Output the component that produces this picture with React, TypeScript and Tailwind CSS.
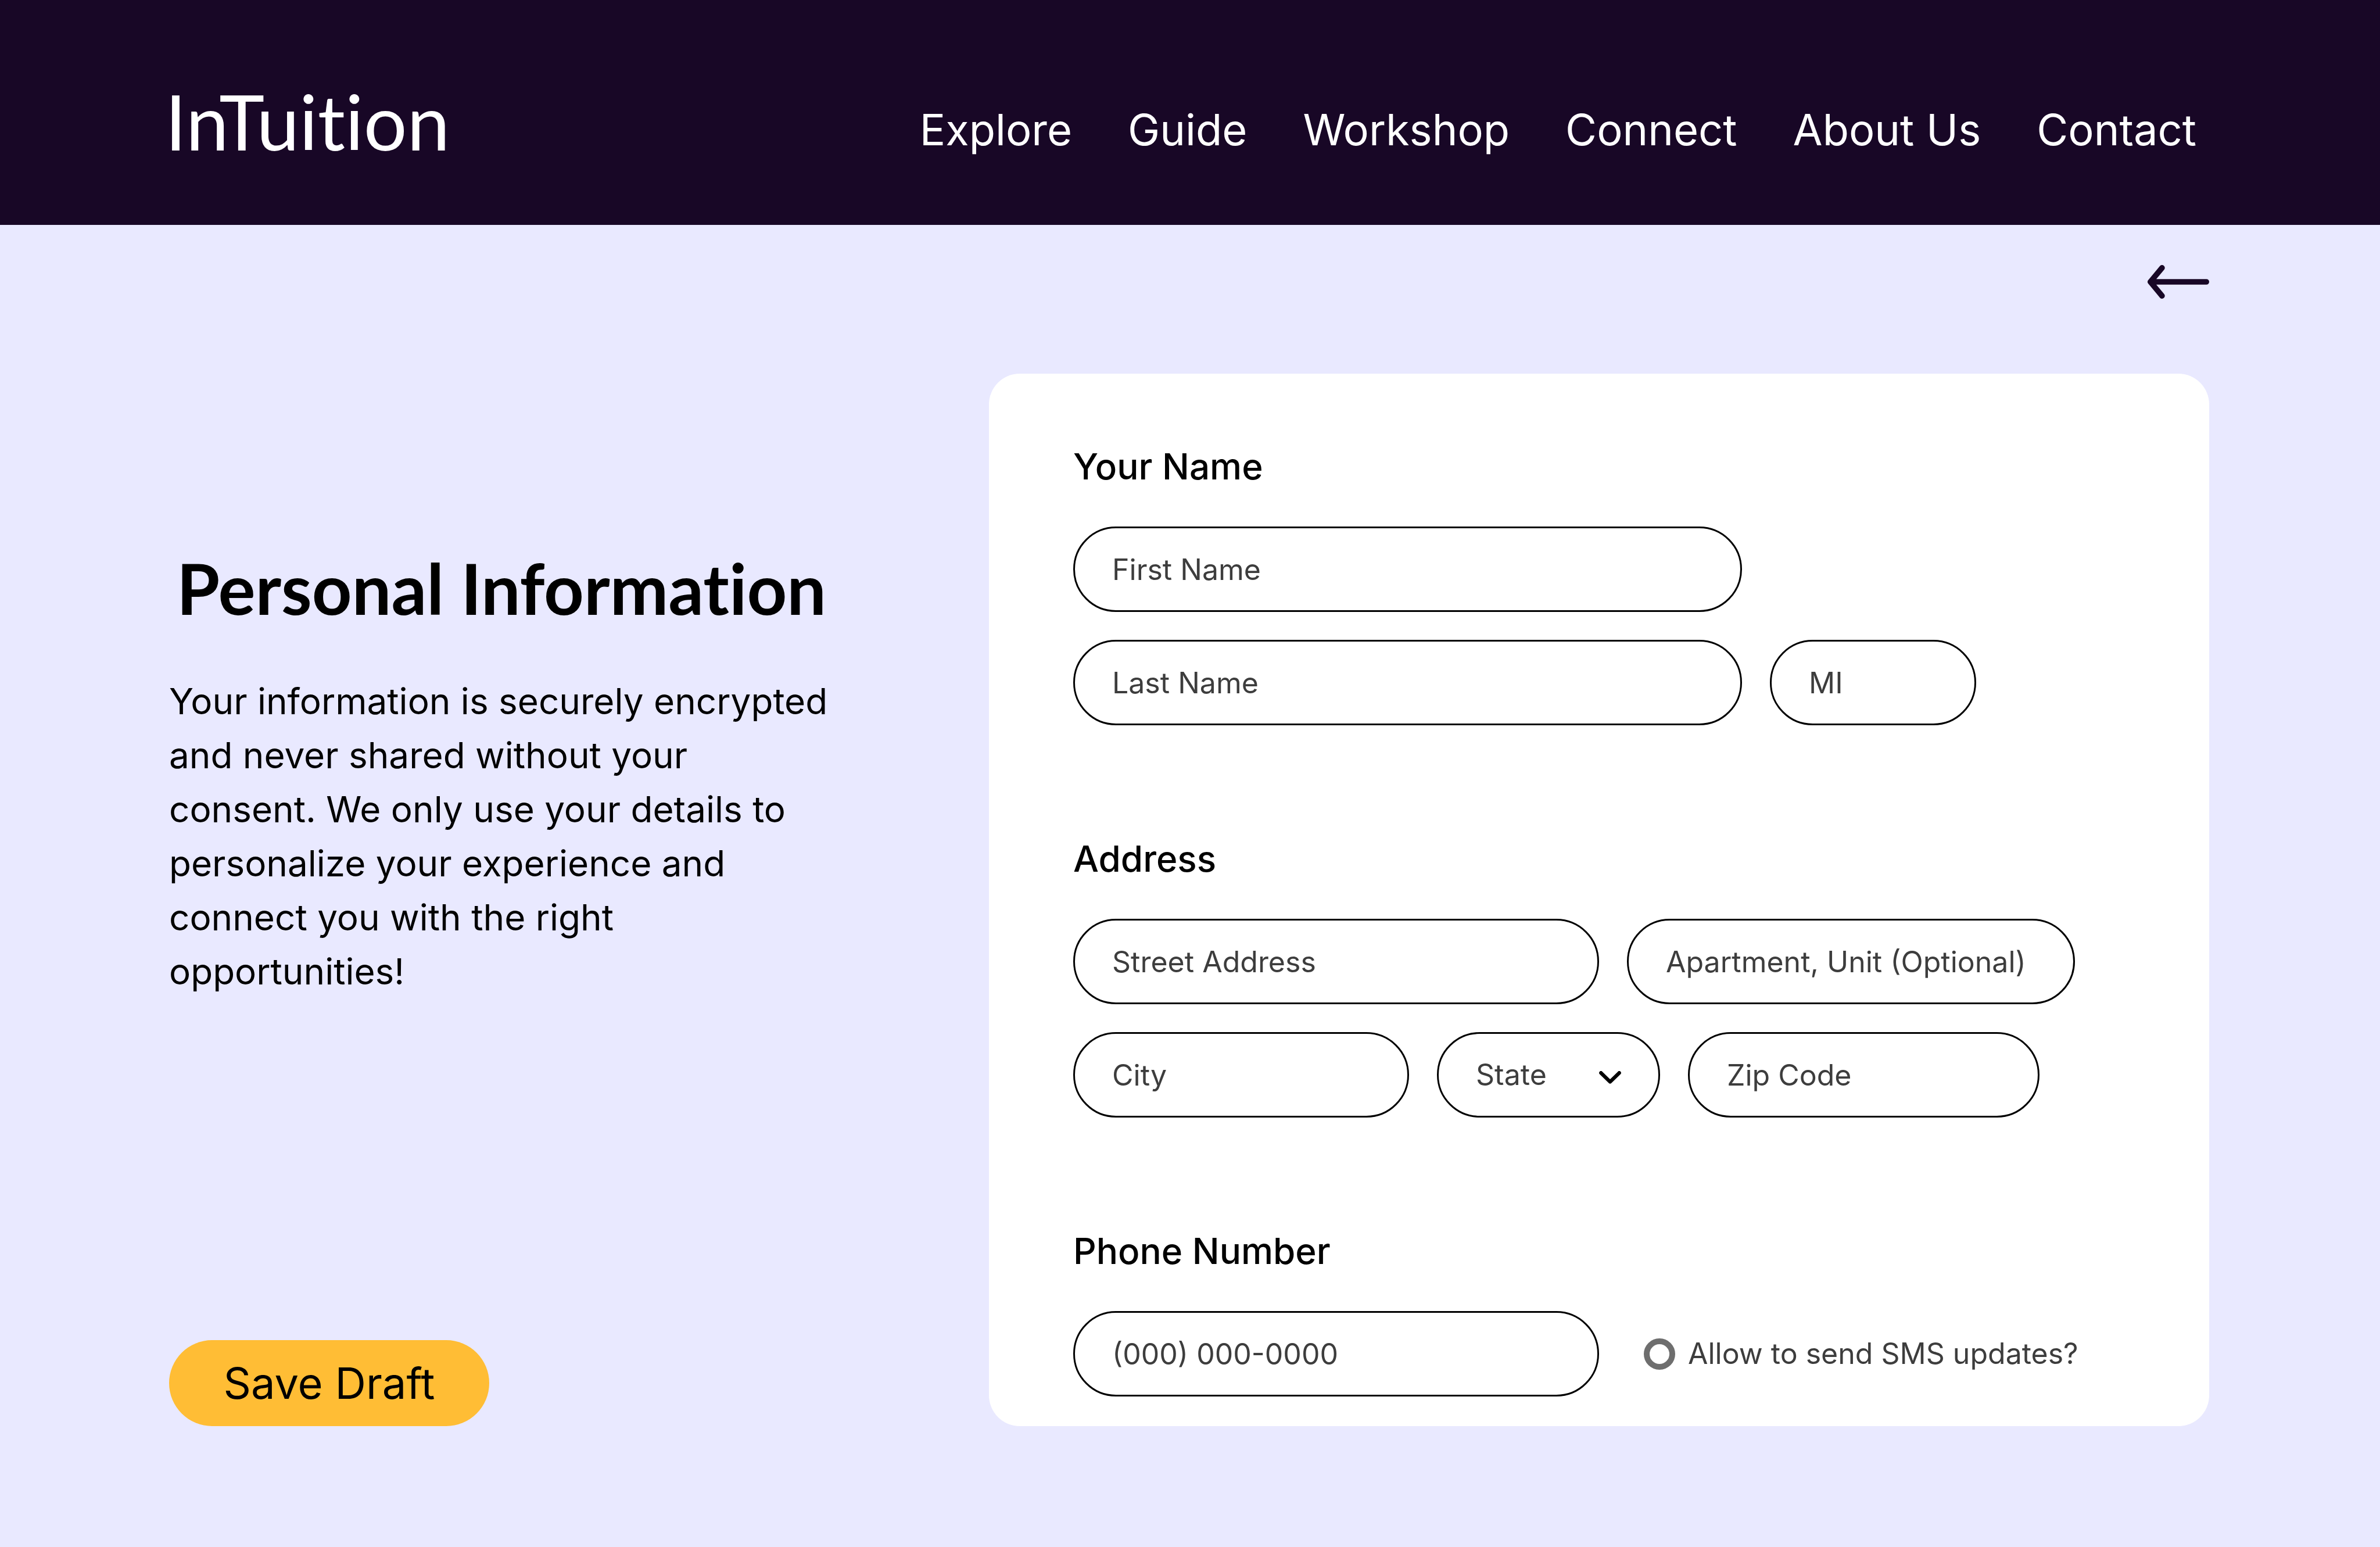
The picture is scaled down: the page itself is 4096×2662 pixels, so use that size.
import clsx from 'clsx'
import type { InputHTMLAttributes, ReactNode } from 'react'

const NAV_ITEMS = ['Explore', 'Guide', 'Workshop', 'Connect', 'About Us', 'Contact']

const STATES = ['California', 'Colorado', 'New York', 'Oregon', 'Texas', 'Washington']

const FIELD_STYLE =
  'h-[147px] rounded-full border-[3px] border-black bg-white pl-[64px] text-[50px]'

function TextField({ className, ...props }: InputHTMLAttributes<HTMLInputElement>) {
  return (
    <input
      type="text"
      aria-label={props.placeholder}
      className={clsx(
        FIELD_STYLE,
        'min-w-0 pr-8 text-black placeholder:text-[#3d3d3d] placeholder:opacity-100',
        className,
      )}
      {...props}
    />
  )
}

function StateSelect() {
  return (
    <div className="relative w-[384px]">
      <select
        aria-label="State"
        defaultValue=""
        className={clsx(FIELD_STYLE, 'w-full appearance-none text-[#3d3d3d]')}
      >
        <option value="" disabled>
          State
        </option>
        {STATES.map((state) => (
          <option key={state}>{state}</option>
        ))}
      </select>
      <svg
        viewBox="0 0 48 28"
        fill="none"
        className="pointer-events-none absolute top-[67px] right-[67px] h-[22px] w-[38px]"
      >
        <path
          d="M4 4 24 23.5 44 4"
          stroke="#000"
          strokeWidth="8"
          strokeLinecap="round"
          strokeLinejoin="round"
        />
      </svg>
    </div>
  )
}

function FieldGroup({ title, children }: { title: string; children: ReactNode }) {
  return (
    <fieldset>
      <legend className="pb-[63px] text-[62px] leading-[80px] font-medium text-black">
        {title}
      </legend>
      <div className="flex flex-col gap-12">{children}</div>
    </fieldset>
  )
}

function Header() {
  return (
    <header className="flex items-end justify-between bg-[#180726] pt-[150px] pr-[316px] pb-[120px] pl-[284px] text-white">
      <a
        href="#"
        className="font-['Lato',sans-serif] text-[132px] leading-[117px] [font-variant-ligatures:none]"
      >
        InTuition
      </a>
      <nav className="flex gap-24 text-[74px] leading-[88px]">
        {NAV_ITEMS.map((item) => (
          <a key={item} href="#">
            {item}
          </a>
        ))}
      </nav>
    </header>
  )
}

export default function App() {
  return (
    <div className="min-h-screen bg-[#e9e9ff] font-['Inter',sans-serif] text-black">
      <Header />
      <main className="flex flex-col pt-[69px] pr-[294px] pb-[208px] pl-[291px]">
        <button type="button" aria-label="Back" className="self-end">
          <svg viewBox="0 0 132 72" fill="none" className="h-[58px] w-[106px]">
            <path
              d="M31 6 6 36l25 30M6 36h120"
              stroke="#180726"
              strokeWidth="12"
              strokeLinecap="round"
              strokeLinejoin="round"
            />
          </svg>
        </button>
        <div className="mt-[129px] flex gap-[267px]">
          <div className="flex w-[1144px] shrink-0 flex-col items-start justify-between pt-[298px]">
            <div>
              <h1 className="text-center font-['Lato',sans-serif] text-[120px] leading-[142px] font-bold [font-variant-ligatures:none]">
                Personal Information
              </h1>
              <p className="mt-[77px] text-[62px] leading-[93px]">
                Your information is securely encrypted and never shared without your consent.
                We only use your details to personalize your experience and connect you with
                the right opportunities!
              </p>
            </div>
            <button
              type="button"
              className="h-[148px] w-[551px] rounded-full bg-[#ffbd35] text-[74px]"
            >
              Save Draft
            </button>
          </div>
          <form className="flex min-w-0 flex-1 flex-col gap-[190px] rounded-[53px] bg-white pt-[120px] pr-16 pb-[51px] pl-[145px]">
            <FieldGroup title="Your Name">
              <TextField placeholder="First Name" className="w-[1151px]" />
              <div className="flex gap-12">
                <TextField placeholder="Last Name" className="w-[1151px]" />
                <TextField placeholder="MI" className="w-[355px]" />
              </div>
            </FieldGroup>
            <FieldGroup title="Address">
              <div className="flex gap-12">
                <TextField placeholder="Street Address" className="w-[905px]" />
                <TextField placeholder="Apartment, Unit (Optional)" className="w-[771px]" />
              </div>
              <div className="flex gap-12">
                <TextField placeholder="City" className="w-[578px]" />
                <StateSelect />
                <TextField placeholder="Zip Code" className="w-[605px]" />
              </div>
            </FieldGroup>
            <FieldGroup title="Phone Number">
              <div className="flex items-center gap-[77px]">
                <TextField type="tel" placeholder="(000) 000-0000" className="w-[905px]" />
                <label className="flex items-center gap-[22px] text-[50px] text-[#3d3d3d]">
                  <input
                    type="radio"
                    name="sms"
                    className="size-[54px] appearance-none rounded-full border-[10px] border-[#6e6e6e] bg-white checked:bg-[#180726]"
                  />
                  Allow to send SMS updates?
                </label>
              </div>
            </FieldGroup>
          </form>
        </div>
      </main>
    </div>
  )
}
